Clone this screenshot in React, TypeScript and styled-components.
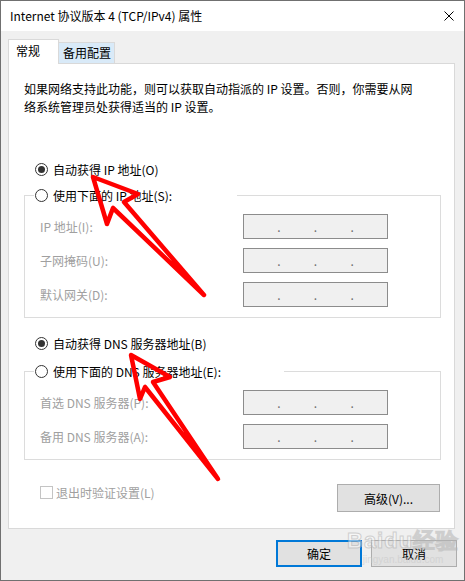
import styled, { createGlobalStyle } from "styled-components";

const GlobalStyle = createGlobalStyle`
  html, body {
    margin: 0;
    padding: 0;
    background: #ffffff;
  }
  body {
    font-family: "Noto Sans CJK SC", "Liberation Sans", sans-serif;
    font-size: 12px;
    color: #000;
  }
`;

const Window = styled.div`
  position: relative;
  width: 465px;
  height: 581px;
  box-sizing: border-box;
  border: 1px solid #707070;
  display: flex;
  flex-direction: column;
  background: #f0f0f0;
  overflow: hidden;
`;

const TitleBar = styled.div`
  height: 30px;
  flex-shrink: 0;
  background: #fff;
  display: flex;
  align-items: center;
  justify-content: space-between;
  padding: 0 10px 0 9px;
`;

const Title = styled.span`
  font-size: 12px;
  line-height: 16px;
`;

const Body = styled.div`
  flex: 1;
  display: flex;
  flex-direction: column;
  padding: 9px 9px 0 7px;
`;

const TabStrip = styled.div`
  display: flex;
  align-items: flex-end;
  height: 24px;
  margin-bottom: -1px;
  position: relative;
  z-index: 1;
`;

const Tab = styled.div<{ $active?: boolean }>`
  box-sizing: border-box;
  border: 1px solid #d9d9d9;
  border-bottom: ${(p) => (p.$active ? "none" : "1px solid #d9d9d9")};
  background: ${(p) => (p.$active ? "#fff" : "#d9eaf8")};
  height: ${(p) => (p.$active ? "25px" : "22px")};
  width: ${(p) => (p.$active ? "51px" : "57px")};
  padding: ${(p) => (p.$active ? "1px 0 0 7px" : "0 0 0 4px")};
  margin-left: ${(p) => (p.$active ? "0" : "-1px")};
  line-height: 19px;
  white-space: nowrap;
`;

const Panel = styled.div`
  background: #fff;
  border: 1px solid #d9d9d9;
  padding: 16px 13px 16px 15px;
  display: flex;
  flex-direction: column;
`;

const Description = styled.p`
  margin: 0;
  line-height: 18px;
`;

const RadioRow = styled.label<{ $top?: number; $indent?: number }>`
  display: flex;
  align-items: center;
  height: 20px;
  margin-top: ${(p) => p.$top ?? 0}px;
  padding-left: ${(p) => p.$indent ?? 0}px;
  background: #fff;
  white-space: nowrap;
`;

const RadioDot = styled.span<{ $checked?: boolean }>`
  box-sizing: border-box;
  width: 13px;
  height: 13px;
  border-radius: 50%;
  border: 1px solid #333;
  background: #fff;
  margin-right: 5px;
  display: flex;
  align-items: center;
  justify-content: center;
  &::after {
    content: "";
    width: 7px;
    height: 7px;
    border-radius: 50%;
    background: ${(p) => (p.$checked ? "#333" : "transparent")};
  }
`;

const Group = styled.fieldset<{ $top: number }>`
  margin: ${(p) => p.$top}px 0 0 0;
  padding: 0 0 10px 9px;
  border: 1px solid #dcdcdc;
  min-width: 0;
`;

const GroupLegend = styled.legend<{ $width: number }>`
  padding: 0 0 0 1px;
  width: ${(p) => p.$width}px;
  background: #fff;
`;

const Rows = styled.div`
  display: flex;
  flex-direction: column;
  gap: 9px;
  padding: 9px 0 0 6px;
`;

const FieldRow = styled.div`
  display: grid;
  grid-template-columns: 203px 145px;
  align-items: center;
  height: 25px;
`;

const FieldLabel = styled.span`
  color: #a0a0a0;
  white-space: nowrap;
`;

const IpBox = styled.div`
  box-sizing: border-box;
  height: 25px;
  border: 1px solid #8c8c8c;
  background: #f0f0f0;
  display: flex;
  align-items: center;
  justify-content: space-evenly;
  color: #6d6d6d;
  line-height: 12px;
`;

const BottomRow = styled.div`
  display: flex;
  justify-content: space-between;
  align-items: flex-start;
  margin-top: 24px;
`;

const CheckRow = styled.label`
  display: flex;
  align-items: center;
  height: 16px;
  padding-left: 16px;
  color: #a0a0a0;
`;

const CheckBox = styled.span`
  box-sizing: border-box;
  width: 13px;
  height: 13px;
  border: 1px solid #c4c4c4;
  background: #fff;
  margin-right: 3px;
`;

const Button = styled.button<{ $width: number; $default?: boolean }>`
  box-sizing: border-box;
  width: ${(p) => p.$width}px;
  height: ${(p) => (p.$default !== undefined ? 27 : 28)}px;
  background: #e1e1e1;
  border: ${(p) => (p.$default ? "2px solid #0078d7" : "1px solid #adadad")};
  font-family: "Noto Sans CJK SC", "Liberation Sans", sans-serif;
  font-size: 12px;
  color: #000;
  padding: 0;
  margin: 0;
`;

const Footer = styled.div`
  display: flex;
  justify-content: flex-end;
  gap: 9px;
  margin: 11px -2px 0 0;
`;

const Overlay = styled.svg`
  position: absolute;
  left: -1px;
  top: -1px;
  pointer-events: none;
`;

const Watermark = styled.div`
  position: absolute;
  left: 346px;
  top: 527px;
  display: flex;
  flex-direction: column;
  align-items: center;
  opacity: 0.55;
  pointer-events: none;
`;

const MarkLogo = styled.div`
  font-family: "Liberation Sans", sans-serif;
  font-weight: bold;
  font-size: 22px;
  line-height: 26px;
  color: rgba(255, 255, 255, 0.85);
  -webkit-text-stroke: 1px #b4b4b4;
  letter-spacing: 1px;
`;

const MarkUrl = styled.div`
  font-family: "Liberation Sans", sans-serif;
  font-size: 10px;
  line-height: 11px;
  color: #c8c8c8;
`;

const ipDots = () => (
  <>
    <span>.</span>
    <span>.</span>
    <span>.</span>
  </>
);

const Field = ({ label }: { label: string }) => (
  <FieldRow>
    <FieldLabel>{label}</FieldLabel>
    <IpBox>{ipDots()}</IpBox>
  </FieldRow>
);

const App = () => {
  return (
    <>
      <GlobalStyle />
      <Window>
        <TitleBar>
          <Title>Internet 协议版本 4 (TCP/IPv4) 属性</Title>
          <svg width="10" height="10" viewBox="0 0 10 10">
            <path d="M0.5 0.5 L9.5 9.5 M9.5 0.5 L0.5 9.5" stroke="#000" strokeWidth="1" fill="none" />
          </svg>
        </TitleBar>
        <Body>
          <TabStrip>
            <Tab $active>常规</Tab>
            <Tab>备用配置</Tab>
          </TabStrip>
          <Panel>
            <Description>
              如果网络支持此功能，则可以获取自动指派的 IP 设置。否则，你需要从网
              <br />
              络系统管理员处获得适当的 IP 设置。
            </Description>

            <RadioRow $top={43} $indent={11}>
              <RadioDot $checked />
              自动获得 IP 地址(O)
            </RadioRow>
            <Group $top={6}>
              <GroupLegend $width={202}>
                <RadioRow>
                  <RadioDot />
                  使用下面的 IP 地址(S):
                </RadioRow>
              </GroupLegend>
              <Rows>
                <Field label="IP 地址(I):" />
                <Field label="子网掩码(U):" />
                <Field label="默认网关(D):" />
              </Rows>
            </Group>

            <RadioRow $top={15} $indent={11}>
              <RadioDot $checked />
              自动获得 DNS 服务器地址(B)
            </RadioRow>
            <Group $top={8}>
              <GroupLegend $width={249}>
                <RadioRow>
                  <RadioDot />
                  使用下面的 DNS 服务器地址(E):
                </RadioRow>
              </GroupLegend>
              <Rows>
                <Field label="首选 DNS 服务器(P):" />
                <Field label="备用 DNS 服务器(A):" />
              </Rows>
            </Group>

            <BottomRow>
              <CheckRow>
                <CheckBox />
                退出时验证设置(L)
              </CheckRow>
              <Button $width={103} style={{ marginRight: 1 }}>
                高级(V)...
              </Button>
            </BottomRow>
          </Panel>
          <Footer>
            <Button $width={86} $default>
              确定
            </Button>
            <Button $width={86} $default={false}>
              取消
            </Button>
          </Footer>
        </Body>

        <Watermark>
          <MarkLogo>Baidu经验</MarkLogo>
          <MarkUrl>jingyan.baidu.com</MarkUrl>
        </Watermark>

        <Overlay width="465" height="581" viewBox="0 0 465 581">
          <polygon
            points="93,177 138,194 124,202 204,295 113,208 107,224"
            fill="none"
            stroke="#ff0000"
            strokeWidth="4.5"
            strokeLinejoin="round"
          />
          <polygon
            points="131,355 170,377 153,382 218,479 145,387 140,399"
            fill="none"
            stroke="#ff0000"
            strokeWidth="4.5"
            strokeLinejoin="round"
          />
        </Overlay>
      </Window>
    </>
  );
};

export default App;
